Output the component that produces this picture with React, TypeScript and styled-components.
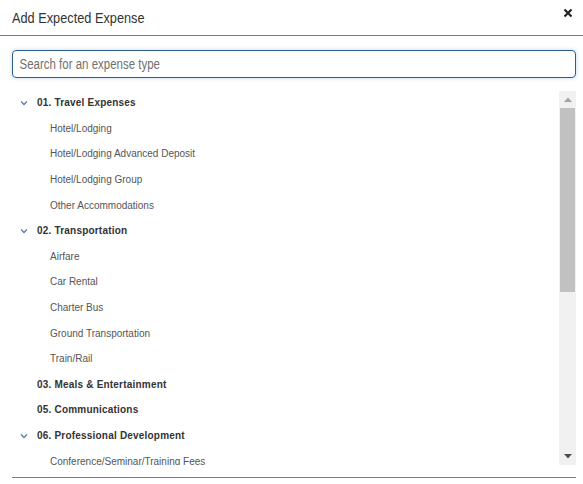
import React from "react";
import styled, { createGlobalStyle } from "styled-components";

const GlobalStyle = createGlobalStyle`
  html, body {
    margin: 0;
    padding: 0;
    background: #ffffff;
  }
  body {
    font-family: "Liberation Sans", Arial, sans-serif;
  }
`;

const Modal = styled.div`
  width: 583px;
  height: 484px;
  display: flex;
  flex-direction: column;
  background: #ffffff;
  overflow: hidden;
`;

const Header = styled.div`
  height: 35px;
  display: flex;
  align-items: center;
  justify-content: space-between;
  padding: 0 8px 0 12px;
  border-bottom: 1px solid #7a7a7a;
`;

// the original uses a narrow face; squeeze Liberation Sans to its width
const Title = styled.h2`
  margin: 0;
  font-size: 15px;
  font-weight: 400;
  color: #333333;
  transform: scaleX(0.85);
  transform-origin: left center;
`;

const CloseButton = styled.button`
  width: 14px;
  height: 14px;
  padding: 0;
  border: none;
  background: transparent;
  display: flex;
  align-items: center;
  justify-content: center;
  align-self: flex-start;
  margin-top: 6px;
  cursor: pointer;
`;

const Body = styled.div`
  display: flex;
  flex-direction: column;
  padding: 14px 7px 0 12px;
`;

const SearchBox = styled.div`
  box-sizing: border-box;
  width: 564px;
  height: 28px;
  border: 1px solid #2d5f8b;
  border-radius: 4px;
  box-shadow: 0 0 4px rgba(70, 140, 210, 0.35);
  overflow: hidden;
  display: flex;
  align-items: center;
`;

const SearchInput = styled.input`
  box-sizing: border-box;
  flex: none;
  width: calc(562px / 0.82);
  height: 26px;
  padding: 0 0 0 8px;
  border: none;
  background: transparent;
  font-family: "Liberation Sans", Arial, sans-serif;
  font-size: 14px;
  color: #333333;
  outline: none;
  transform: scaleX(0.82);
  transform-origin: left center;

  &::placeholder {
    color: #707070;
  }
`;

const ListArea = styled.div`
  margin-top: 12px;
  height: 375px;
  display: flex;
  border-bottom: 1px solid #7a7a7a;
  padding-bottom: 12px;
`;

const List = styled.ul`
  flex: 1;
  margin: 0;
  padding: 0;
  list-style: none;
  overflow: hidden;
`;

const Row = styled.li<{ $level: number }>`
  flex: none;
  height: 25.6px;
  display: flex;
  align-items: center;
  padding-left: ${(p) => (p.$level === 0 ? 25 : 38)}px;
  font-size: 10px;
  font-weight: ${(p) => (p.$level === 0 ? 700 : 400)};
  letter-spacing: ${(p) => (p.$level === 0 ? "0.2px" : "0")};
  color: ${(p) => (p.$level === 0 ? "#333333" : "#555555")};
  white-space: nowrap;
`;

const Chevron = styled.span`
  width: 17px;
  margin-left: -17px;
  display: flex;
  align-items: center;
`;

const Scrollbar = styled.div`
  width: 17px;
  height: 374px;
  margin-top: 1px;
  display: flex;
  flex-direction: column;
  background: #f1f1f1;
`;

const ScrollArrow = styled.div`
  height: 17px;
  display: flex;
  align-items: center;
  justify-content: center;
`;

const ScrollThumb = styled.div`
  height: 184px;
  margin: 0 1px;
  background: #c1c1c1;
`;

const ScrollTrack = styled.div`
  flex: 1;
`;

type Item = { label: string; level: number; open?: boolean };

const items: Item[] = [
  { label: "01. Travel Expenses", level: 0, open: true },
  { label: "Hotel/Lodging", level: 1 },
  { label: "Hotel/Lodging Advanced Deposit", level: 1 },
  { label: "Hotel/Lodging Group", level: 1 },
  { label: "Other Accommodations", level: 1 },
  { label: "02. Transportation", level: 0, open: true },
  { label: "Airfare", level: 1 },
  { label: "Car Rental", level: 1 },
  { label: "Charter Bus", level: 1 },
  { label: "Ground Transportation", level: 1 },
  { label: "Train/Rail", level: 1 },
  { label: "03. Meals & Entertainment", level: 0 },
  { label: "05. Communications", level: 0 },
  { label: "06. Professional Development", level: 0, open: true },
  { label: "Conference/Seminar/Training Fees", level: 1 },
];

const App = () => {
  return (
    <>
      <GlobalStyle />
      <Modal>
        <Header>
          <Title>Add Expected Expense</Title>
          <CloseButton aria-label="Close">
            <svg width="10" height="10" viewBox="0 0 10 10">
              <path d="M1.5 1.5 L8.5 8.5 M8.5 1.5 L1.5 8.5" stroke="#222" strokeWidth="2.2" />
            </svg>
          </CloseButton>
        </Header>
        <Body>
          <SearchBox>
            <SearchInput placeholder="Search for an expense type" />
          </SearchBox>
          <ListArea>
            <List>
              {items.map((item) => (
                <Row key={item.label} $level={item.level}>
                  {item.open && (
                    <Chevron>
                      <svg width="8" height="6" viewBox="0 0 8 6">
                        <path d="M1 1.5 L4 4.5 L7 1.5" fill="none" stroke="#4f7fae" strokeWidth="1.3" />
                      </svg>
                    </Chevron>
                  )}
                  {item.label}
                </Row>
              ))}
            </List>
            <Scrollbar>
              <ScrollArrow>
                <svg width="8" height="5" viewBox="0 0 8 5">
                  <path d="M0 5 L4 0.5 L8 5 Z" fill="#a3a3a3" />
                </svg>
              </ScrollArrow>
              <ScrollThumb />
              <ScrollTrack />
              <ScrollArrow>
                <svg width="8" height="5" viewBox="0 0 8 5">
                  <path d="M0 0 L8 0 L4 4.5 Z" fill="#505050" />
                </svg>
              </ScrollArrow>
            </Scrollbar>
          </ListArea>
        </Body>
      </Modal>
    </>
  );
};

export default App;
